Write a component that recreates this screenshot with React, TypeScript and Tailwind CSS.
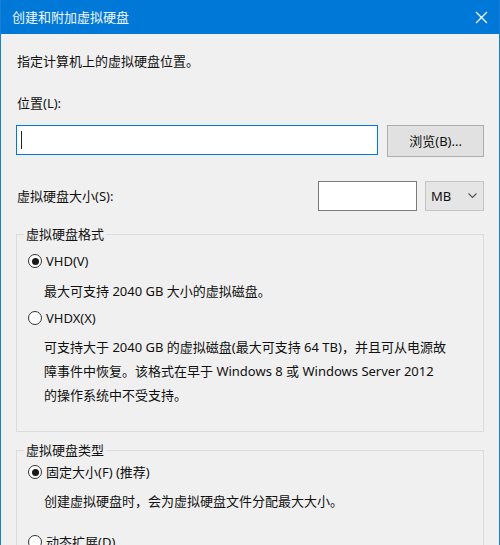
import React from "react";

function Radio({ checked, label }: { checked?: boolean; label: string }) {
  return (
    <div className="flex h-[20px] items-center gap-[4px]">
      <span className="flex h-[14px] w-[14px] items-center justify-center rounded-full border border-[#333333] bg-white">
        {checked && <span className="h-[7px] w-[7px] rounded-full bg-[#1a1a1a]" />}
      </span>
      <span>{label}</span>
    </div>
  );
}

export default function App() {
  return (
    <div className="flex h-[545px] w-[500px] flex-col overflow-hidden border-x border-[#1a7fd4] bg-[#f0f0f0] font-['Noto_Sans','Noto_Sans_CJK_SC',sans-serif] text-[13px] leading-[20px] text-[#111111]">
      <div className="flex h-[34px] shrink-0 items-center justify-between bg-[#0078d7] pl-[11px] pr-[10px] text-[#f4f8fc]">
        <span>创建和附加虚拟硬盘</span>
        <svg width="13" height="13" viewBox="0 0 13 13" className="mr-[1px]">
          <path d="M1 1 L12 12 M12 1 L1 12" stroke="white" strokeWidth="1.3" fill="none" />
        </svg>
      </div>

      <div className="flex flex-col px-[15px]">
        <div className="mt-[17px] pl-[1px]">指定计算机上的虚拟硬盘位置。</div>
        <div className="mt-[22px] pl-[1px]">位置(L):</div>

        <div className="mt-[12px] flex items-start gap-[9px]">
          <div className="flex h-[30px] w-[363px] items-center border border-[#0078d7] bg-white pl-[4px]">
            <span className="h-[18px] w-px bg-[#222222]" />
          </div>
          <button
            type="button"
            className="h-[32px] w-[97px] border border-[#adadad] bg-[#e1e1e1] text-[13px]"
          >
            浏览(B)...
          </button>
        </div>

        <div className="mt-[24px] flex h-[30px] items-center">
          <span className="flex-1 pl-[1px]">虚拟硬盘大小(S):</span>
          <div className="h-[30px] w-[99px] border border-[#7a7a7a] bg-white" />
          <div className="ml-[8px] flex h-[30px] w-[59px] items-center justify-between border border-[#c4c4c4] bg-[#e5e5e5] pl-[5px] pr-[6px]">
            <span>MB</span>
            <svg width="9" height="6" viewBox="0 0 9 6">
              <path d="M0.5 0.5 L4.5 4.5 L8.5 0.5" stroke="#555555" strokeWidth="1.1" fill="none" />
            </svg>
          </div>
        </div>

        <fieldset className="mt-[13px] border border-[#dcdcdc] pb-[24px] pl-[11px]">
          <legend className="ml-[-4px] px-[2px]">虚拟硬盘格式</legend>
          <div className="mt-[7px]">
            <Radio checked label="VHD(V)" />
          </div>
          <div className="mt-[10px] pl-[16px]">最大可支持 2040 GB 大小的虚拟磁盘。</div>
          <div className="mt-[7px]">
            <Radio label="VHDX(X)" />
          </div>
          <div className="mt-[7px] pl-[16px] leading-[24px]">
            <div>可支持大于 2040 GB 的虚拟磁盘(最大可支持 64 TB)，并且可从电源故</div>
            <div>障事件中恢复。该格式在早于 Windows 8 或 Windows Server 2012</div>
            <div>的操作系统中不受支持。</div>
          </div>
        </fieldset>

        <fieldset className="mt-[8px] border border-[#dcdcdc] pb-[24px] pl-[11px]">
          <legend className="ml-[-4px] px-[2px]">虚拟硬盘类型</legend>
          <div className="mt-[2px]">
            <Radio checked label="固定大小(F) (推荐)" />
          </div>
          <div className="mt-[9px] pl-[16px]">创建虚拟硬盘时，会为虚拟硬盘文件分配最大大小。</div>
          <div className="mt-[21px]">
            <Radio label="动态扩展(D)" />
          </div>
        </fieldset>
      </div>
    </div>
  );
}
